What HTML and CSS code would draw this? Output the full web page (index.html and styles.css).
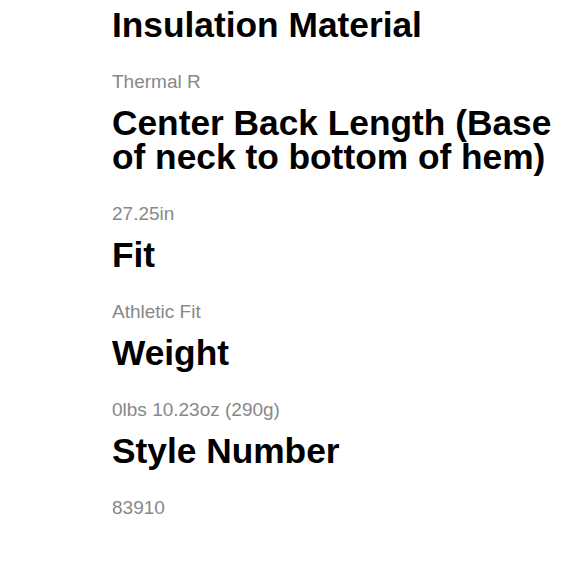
FILE: index.html
```html
<!DOCTYPE html>
<html>
<head>
<meta charset="utf-8">
<link rel="stylesheet" href="styles.css">
</head>
<body>
<div class="specs">
  <h2 class="spec-title">Insulation Material</h2>
  <p class="spec-value">Thermal R</p>
  <h2 class="spec-title">Center Back Length (Base of neck to bottom of hem)</h2>
  <p class="spec-value">27.25in</p>
  <h2 class="spec-title">Fit</h2>
  <p class="spec-value">Athletic Fit</p>
  <h2 class="spec-title">Weight</h2>
  <p class="spec-value">0lbs 10.23oz (290g)</p>
  <h2 class="spec-title">Style Number</h2>
  <p class="spec-value">83910</p>
</div>
</body>
</html>
```

FILE: styles.css
```css
html, body {
  margin: 0;
  padding: 0;
  background: #ffffff;
}
body {
  font-family: "Liberation Sans", Arial, sans-serif;
}
.specs {
  padding: 8px 20px 0 112px;
}
.spec-title {
  margin: 0;
  font-size: 35.3px;
  line-height: 34px;
  font-weight: bold;
  color: #000000;
}
.spec-value {
  margin: 29px 0 13px;
  font-size: 19px;
  line-height: 22px;
  color: #888888;
}
```
